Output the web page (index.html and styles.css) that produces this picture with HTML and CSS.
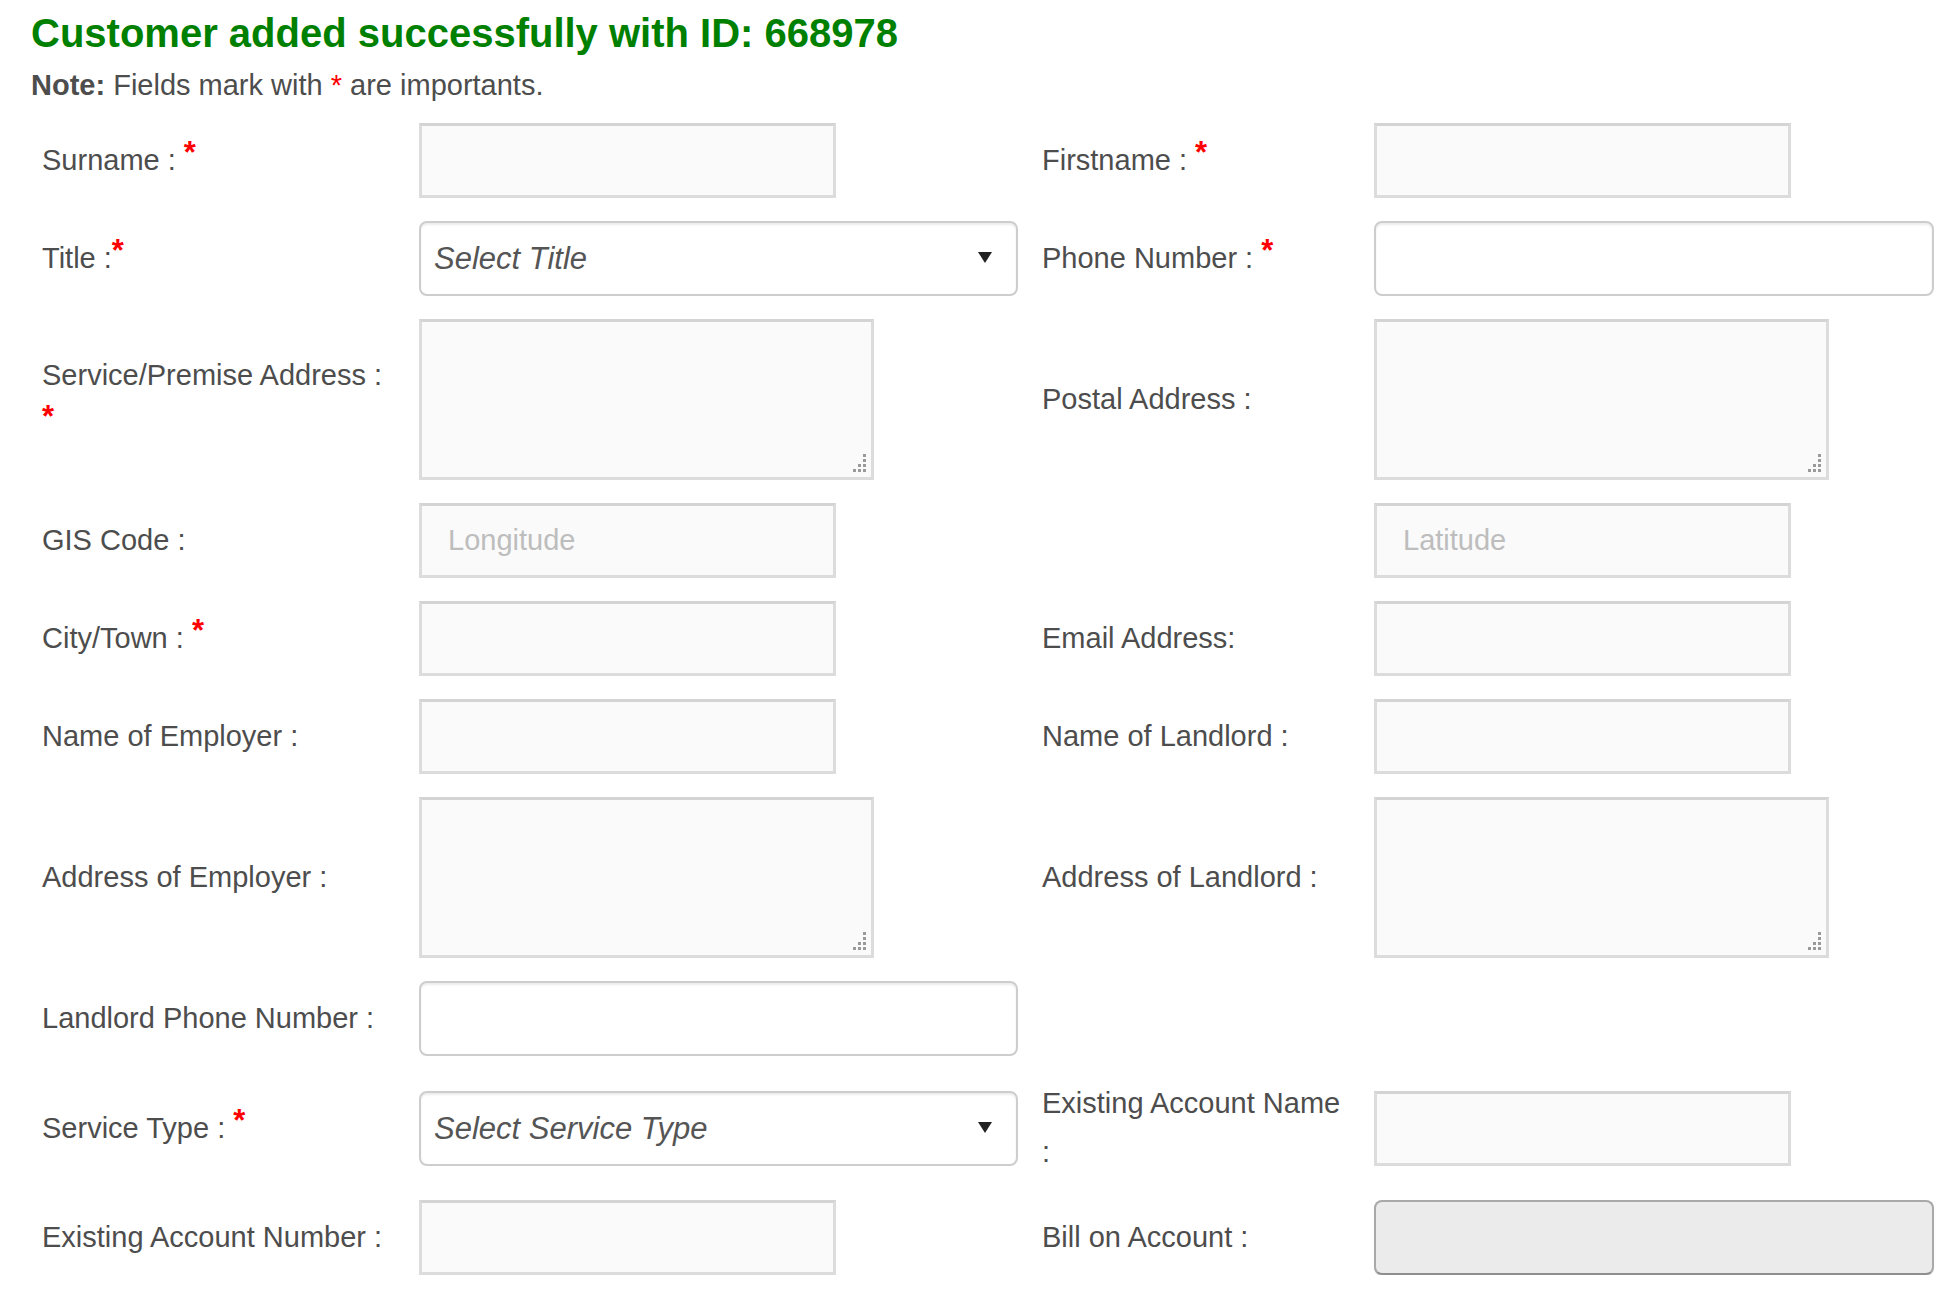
FILE: index.html
```html
<!DOCTYPE html>
<html lang="en">
<head>
<meta charset="utf-8">
<title>Add Customer</title>
<link rel="stylesheet" href="styles.css">
</head>
<body>
<div class="page">
  <h3 class="success">Customer added successfully with ID: 668978</h3>
  <p class="note"><b>Note:</b> Fields mark with <span class="star-n">*</span> are importants.</p>

  <form class="form">
    <label class="lbl">Surname : <span class="req">*</span></label>
    <div class="fld"><input class="in short" type="text"></div>
    <label class="lbl">Firstname : <span class="req">*</span></label>
    <div class="fld"><input class="in short" type="text"></div>

    <label class="lbl">Title :<span class="req">*</span></label>
    <div class="fld"><div class="sel-wrap"><select class="sel"><option>Select Title</option></select></div></div>
    <label class="lbl">Phone Number : <span class="req">*</span></label>
    <div class="fld"><input class="in wide w-right" type="text"></div>

    <label class="lbl">Service/Premise Address : <span class="req">*</span></label>
    <div class="fld"><div class="ta-wrap"><textarea class="ta"></textarea></div></div>
    <label class="lbl">Postal Address :</label>
    <div class="fld"><div class="ta-wrap"><textarea class="ta"></textarea></div></div>

    <label class="lbl">GIS Code :</label>
    <div class="fld"><input class="in short" type="text" placeholder="Longitude"></div>
    <div class="lbl"></div>
    <div class="fld"><input class="in short" type="text" placeholder="Latitude"></div>

    <label class="lbl">City/Town : <span class="req">*</span></label>
    <div class="fld"><input class="in short" type="text"></div>
    <label class="lbl">Email Address:</label>
    <div class="fld"><input class="in short" type="text"></div>

    <label class="lbl">Name of Employer :</label>
    <div class="fld"><input class="in short" type="text"></div>
    <label class="lbl">Name of Landlord :</label>
    <div class="fld"><input class="in short" type="text"></div>

    <label class="lbl">Address of Employer :</label>
    <div class="fld"><div class="ta-wrap"><textarea class="ta"></textarea></div></div>
    <label class="lbl">Address of Landlord :</label>
    <div class="fld"><div class="ta-wrap"><textarea class="ta"></textarea></div></div>

    <label class="lbl">Landlord Phone Number :</label>
    <div class="fld"><input class="in wide w-left" type="text"></div>
    <div class="lbl"></div>
    <div class="fld"></div>

    <label class="lbl">Service Type : <span class="req">*</span></label>
    <div class="fld"><div class="sel-wrap"><select class="sel"><option>Select Service Type</option></select></div></div>
    <label class="lbl">Existing Account Name :</label>
    <div class="fld"><input class="in short" type="text"></div>

    <label class="lbl">Existing Account Number :</label>
    <div class="fld"><input class="in short" type="text"></div>
    <label class="lbl">Bill on Account :</label>
    <div class="fld"><input class="in locked" type="text" disabled></div>
  </form>
</div>
</body>
</html>
```

FILE: styles.css
```css
* {
  box-sizing: border-box;
}

html,
body {
  margin: 0;
  padding: 0;
  background: #ffffff;
}

body {
  font-family: "Liberation Sans", Arial, sans-serif;
  color: #4d4d4d;
}

.page {
  padding: 9px 16px 0 31px;
}

.success {
  margin: 0;
  font-size: 40px;
  line-height: 48px;
  font-weight: bold;
  color: #008000;
}

.note {
  margin: 10px 0 0;
  font-size: 29px;
  line-height: 36px;
  color: #4d4d4d;
}

.note b {
  font-weight: bold;
}

.star-n {
  color: #ff0000;
}

.form {
  display: grid;
  grid-template-columns: 377px 623px 332px 1fr;
  row-gap: 23px;
  align-items: center;
  margin-top: 20px;
}

.lbl {
  padding: 0 10px 0 11px;
  font-size: 29px;
  line-height: 49px;
  color: #4d4d4d;
}

.req {
  color: #ff0000;
  font-weight: bold;
  font-size: 31px;
  line-height: 0;
  vertical-align: 7px;
}

.fld {
  display: flex;
  padding-left: 11px;
}

.in {
  margin: 0;
  height: 75px;
  font-family: "Liberation Sans", Arial, sans-serif;
  font-size: 29px;
  color: #555555;
  outline: none;
}

.short {
  width: 417px;
  background: #fafafa;
  border: 3px solid #dcdcdc;
  border-top-color: #d4d4d4;
  border-radius: 0;
  padding: 0 26px;
}

.short::placeholder {
  color: #bdbdbd;
}

.wide {
  background: #ffffff;
  border: 2px solid #cdcdcd;
  border-radius: 8px;
  box-shadow: inset 0 2px 2px rgba(0, 0, 0, 0.075);
  padding: 0 24px;
}

.w-left {
  width: 599px;
}

.w-right {
  width: 560px;
}

.locked {
  width: 560px;
  background: #ebebeb;
  border: 2px solid #a9a9a9;
  border-bottom-color: #8f8f8f;
  border-radius: 8px;
  box-shadow: 0 1px 1px rgba(0, 0, 0, 0.15);
}

.sel-wrap {
  position: relative;
  width: 599px;
}

.sel {
  -webkit-appearance: none;
  appearance: none;
  display: block;
  width: 100%;
  height: 75px;
  margin: 0;
  padding: 0 44px 0 13px;
  background: #ffffff;
  border: 2px solid #cdcdcd;
  border-radius: 8px;
  box-shadow: inset 0 2px 2px rgba(0, 0, 0, 0.075);
  font-family: "Liberation Sans", Arial, sans-serif;
  font-size: 31px;
  font-style: italic;
  color: #555555;
  outline: none;
}

.sel-wrap::after {
  content: "";
  position: absolute;
  right: 26px;
  top: 31px;
  width: 0;
  height: 0;
  border-left: 7px solid transparent;
  border-right: 7px solid transparent;
  border-top: 11px solid #222222;
  pointer-events: none;
}

.ta-wrap {
  position: relative;
  width: 455px;
  height: 161px;
}

.ta {
  display: block;
  width: 100%;
  height: 100%;
  margin: 0;
  resize: none;
  background: #fafafa;
  border: 3px solid #dcdcdc;
  border-top-color: #d4d4d4;
  font-family: "Liberation Sans", Arial, sans-serif;
  font-size: 29px;
  outline: none;
}

.ta-wrap::after {
  content: "";
  position: absolute;
  right: 8px;
  bottom: 8px;
  width: 3px;
  height: 3px;
  background: #9a9a9a;
  box-shadow: 0 -5px #9a9a9a, 0 -10px #9a9a9a, 0 -15px #9a9a9a,
    -5px 0 #9a9a9a, -5px -5px #9a9a9a, -10px 0 #9a9a9a;
  pointer-events: none;
}
```
